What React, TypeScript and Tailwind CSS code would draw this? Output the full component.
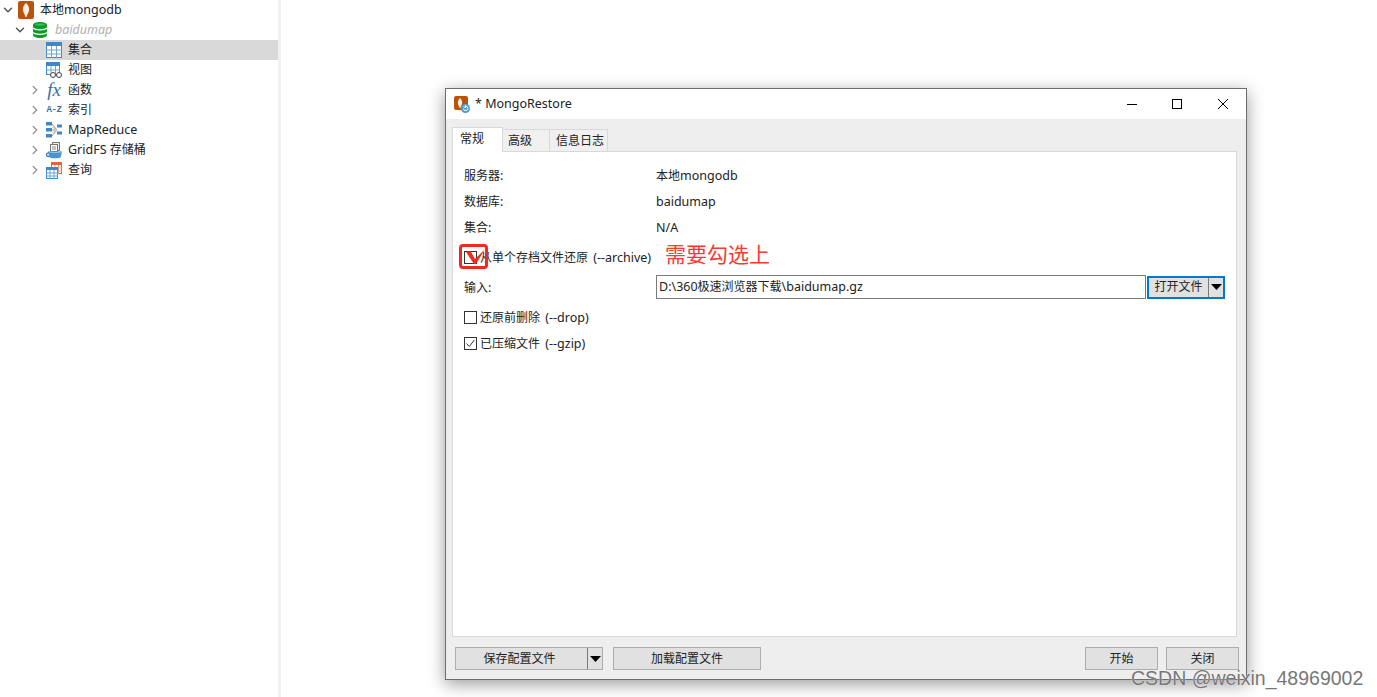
import React from 'react';
import { ChevronDown, ChevronRight } from 'lucide-react';

const font = 'font-["Noto_Sans","Noto_Sans_CJK_SC",sans-serif]';

// chinese runs sit at 12px, latin runs at the slightly larger base size
const T = ({ children }: { children: string }) => (
  <>
    {children.split(/([\u4e00-\u9fff]+)/).map((part, i) =>
      i % 2 === 1 ? <span key={i} className="text-[12px]">{part}</span> : part
    )}
  </>
);

const TableIcon = () => (
  <svg width="16" height="16" viewBox="0 0 16 16">
    <rect x="0.5" y="0.5" width="15" height="15" fill="#fff" stroke="#3f87c5" />
    <rect x="0" y="0" width="16" height="4" fill="#3f87c5" />
    <path d="M0 8h16M0 12h16M5.5 4v12M10.5 4v12" stroke="#6aa5d8" fill="none" />
  </svg>
);

const ViewIcon = () => (
  <svg width="16" height="16" viewBox="0 0 16 16">
    <rect x="0.5" y="0.5" width="13" height="12" fill="#fff" stroke="#3f87c5" />
    <rect x="0" y="0" width="14" height="4" fill="#3f87c5" />
    <path d="M0 8h14M5 4v8M9.5 4v8" stroke="#6aa5d8" fill="none" />
    <circle cx="7" cy="13" r="2.5" fill="#fff" stroke="#444" />
    <circle cx="13" cy="13" r="2.5" fill="#fff" stroke="#444" />
  </svg>
);

const DbIcon = () => (
  <svg width="14" height="16" viewBox="0 0 14 16">
    <path d="M0 3c0-4 14-4 14 0v10c0 4-14 4-14 0z" fill="#0f9a2c" />
    <path d="M0 6c2 2.4 12 2.4 14 0M0 10.5c2 2.4 12 2.4 14 0" stroke="#fff" strokeWidth="1.2" fill="none" />
    <ellipse cx="7" cy="2.6" rx="4.5" ry="1" fill="#3cc25a" />
  </svg>
);

const MongoIcon = () => (
  <svg width="16" height="18" viewBox="0 0 16 18">
    <rect width="16" height="18" rx="2" fill="#b9530b" />
    <path d="M8 2c2.6 2.4 3.4 5 3 7.4C10.600 12 9 13.500 8.400 16h-.8C7 13.500 5.400 12 5 9.400 4.600 7 5.400 4.400 8 2z" fill="#fbeee2" />
  </svg>
);

const MapReduceIcon = () => (
  <svg width="16" height="16" viewBox="0 0 16 16">
    <path d="M6 2l5 6-5 6M6 8h5" stroke="#9a9a9a" fill="none" />
    <path d="M6 5l5 3-5 3" stroke="#c4c4c4" fill="none" />
    <rect x="0" y="0" width="6" height="3.500" fill="#3f87c5" />
    <rect x="0" y="6" width="6" height="3.500" fill="#3f87c5" />
    <rect x="0" y="12" width="6" height="3.500" fill="#3f87c5" />
    <rect x="11" y="2.500" width="5" height="3" fill="#3f87c5" />
    <rect x="11" y="9.500" width="5" height="3" fill="#3f87c5" />
  </svg>
);

const GridFsIcon = () => (
  <svg width="16" height="17" viewBox="0 0 16 17">
    <rect x="6.500" y="0.500" width="7" height="8" fill="#eee" stroke="#777" />
    <rect x="4.500" y="2.500" width="7" height="7" fill="#fff" stroke="#777" />
    <path d="M6 5h4M6 7h4" stroke="#888" />
    <path d="M2 9.500h14l-1.200 5.500c-.4 1.700-11 1.700-11.600 0z" fill="#4a94d4" />
    <path d="M3 10.500C-.5 11.500-.5 14.500 3 14.500" stroke="#2f6ea8" strokeWidth="1.300" fill="none" />
    <path d="M2 9.500c3 1.400 11 1.400 14 0" stroke="#9cc8ec" fill="none" />
  </svg>
);

const QueryIcon = () => (
  <svg width="16" height="17" viewBox="0 0 16 17">
    <rect x="5.500" y="0.500" width="10" height="11" fill="#fff" stroke="#d9654f" />
    <rect x="5" y="0" width="11" height="3" fill="#d9654f" />
    <path d="M5 6h11M5 9h11M9 3v9M12.500 3v9" stroke="#e49a8a" fill="none" />
    <rect x="0.500" y="5.500" width="11" height="11" fill="#fff" stroke="#3f87c5" />
    <rect x="0" y="5" width="12" height="3" fill="#3f87c5" />
    <path d="M0 11h12M0 14h12M4 8v9M8 8v9" stroke="#6aa5d8" fill="none" />
  </svg>
);

const RestoreIcon = () => (
  <svg width="16" height="17" viewBox="0 0 16 17">
    <rect x="0" y="0" width="14" height="14" rx="2" fill="#b9530b" />
    <path d="M6 2c2 2 2.500 4 2 6-.4 1.500-1.300 2.500-1.700 4h-.6C5.300 10.500 4.400 9.500 4 8c-.5-2 0-4 2-6z" fill="#fbeee2" />
    <circle cx="11.500" cy="12.500" r="4.500" fill="#4a9bd8" />
    <path d="M9.500 12.500a2.200 2.200 0 1 0 2-2.200M11.500 8.800v3l-2-1.500" stroke="#fff" fill="none" />
  </svg>
);

const rows = [
  { label: '集合', icon: <TableIcon />, selected: true },
  { label: '视图', icon: <ViewIcon /> },
  { label: '函数', arrow: true, icon: <span className='w-4 text-center font-["Liberation_Serif",serif] italic text-[19px] leading-4 text-[#3c6f9e]'>fx</span> },
  { label: '索引', arrow: true, icon: <span className='w-4 whitespace-nowrap text-center font-["Liberation_Mono",monospace] font-bold text-[9px] leading-4 tracking-[-0.4px] text-[#3c6f9e]'>A-Z</span> },
  { label: 'MapReduce', arrow: true, icon: <MapReduceIcon /> },
  { label: 'GridFS 存储桶', arrow: true, icon: <GridFsIcon /> },
  { label: '查询', arrow: true, icon: <QueryIcon /> },
];

const Sidebar = () => (
  <div className="w-[278px] shrink-0 text-[12.5px] text-[#222]">
    <div className="flex h-5 items-center">
      <ChevronDown className="ml-px w-3.5 h-3.5 text-[#555]" strokeWidth={2.5} />
      <span className="ml-[3px]"><MongoIcon /></span>
      <span className="ml-[6px]"><T>本地mongodb</T></span>
    </div>
    <div className="flex h-5 items-center">
      <ChevronDown className="ml-[13px] w-3.5 h-3.5 text-[#555]" strokeWidth={2.5} />
      <span className="ml-[6px]"><DbIcon /></span>
      <span className="ml-2 italic text-[#b0b0b0]">baidumap</span>
    </div>
    {rows.map((r) => (
      <div key={r.label} className={`flex h-5 items-center pl-[28px] ${r.selected ? 'bg-[#d9d9d9]' : ''}`}>
        <span className="w-[18px] flex justify-start">
          {r.arrow && <ChevronRight className="w-3.5 h-3.5 text-[#999]" strokeWidth={2.5} />}
        </span>
        <span className="flex w-4 justify-center overflow-visible">{r.icon}</span>
        <span className="ml-[6px]"><T>{r.label}</T></span>
      </div>
    ))}
  </div>
);

const Checkbox = ({ checked }: { checked?: boolean }) => (
  <span className="flex h-[13px] w-[13px] items-center justify-center border border-[#333] bg-white">
    {checked && (
      <svg width="11" height="11" viewBox="0 0 11 11">
        <path d="M1.500 5.500l2.800 3 5-6.500" stroke="#333" fill="none" />
      </svg>
    )}
  </span>
);

const Caret = () => (
  <svg width="11" height="6" viewBox="0 0 11 6"><path d="M0 0h11L5.500 6z" fill="#000" /></svg>
);

const Button = ({ label, w }: { label: string; w: string }) => (
  <button className={`h-[23px] ${w} border border-[#adadad] bg-[#e1e1e1] text-[12px] text-[#222]`}>{label}</button>
);

const Field = ({ label, value }: { label: string; value: string }) => (
  <div className="flex h-[26px] items-center pt-[2px]">
    <span className="w-[192px]"><T>{label}</T></span>
    <span><T>{value}</T></span>
  </div>
);

const CheckRow = ({ label, checked, className }: { label: string; checked?: boolean; className?: string }) => (
  <div className={`flex h-[26px] items-center gap-[3px] ${className ?? ''}`}>
    <Checkbox checked={checked} />
    <span className="pt-[2px] [word-spacing:2px]"><T>{label}</T></span>
  </div>
);

const Dialog = () => (
  <div className="absolute left-[445px] top-[88px] flex h-[592px] w-[802px] flex-col border border-[#6d6d6d] bg-[#eeeeee] text-[12.5px] text-[#222] shadow-[0_4px_16px_rgba(0,0,0,0.4)]">
    <div className="flex h-[30px] shrink-0 items-center bg-white pl-2">
      <RestoreIcon />
      <span className="ml-[5px]">* MongoRestore</span>
      <div className="ml-auto flex items-center">
        <svg width="12" height="12" viewBox="0 0 12 12"><path d="M1 6.500h10" stroke="#000" /></svg>
        <svg className="ml-[33px]" width="12" height="12" viewBox="0 0 12 12"><rect x="1.500" y="1.500" width="9" height="9" fill="none" stroke="#000" /></svg>
        <svg className="ml-[34px] mr-[17px]" width="12" height="12" viewBox="0 0 12 12"><path d="M1 1l10 10M11 1L1 11" stroke="#000" /></svg>
      </div>
    </div>
    <div className="flex h-[32px] shrink-0 items-end pl-[6px] text-[12px]">
      <div className="z-10 -mb-px flex h-[25px] w-[51px] items-start border border-b-0 border-[#d9d9d9] bg-white pl-[7px] pt-[2px]">常规</div>
      <div className="flex h-[22px] w-[47px] items-center border border-l-0 border-b-0 border-[#d9d9d9] bg-[#f0f0f0] pl-[5px] pt-px">高级</div>
      <div className="flex h-[22px] w-[58px] items-center border border-l-0 border-b-0 border-[#d9d9d9] bg-[#f0f0f0] pl-[6px] pt-px">信息日志</div>
    </div>
    <div className="ml-[6px] mr-[9px] flex-1 border border-[#d9d9d9] bg-white pl-[11px] pr-[11px] pt-[10px]">
      <Field label="服务器:" value="本地mongodb" />
      <Field label="数据库:" value="baidumap" />
      <Field label="集合:" value="N/A" />
      <CheckRow className="mt-1" label="从单个存档文件还原 (--archive)" />
      <div className="mt-1 flex h-[26px] items-center">
        <span className="w-[192px] pt-[2px]"><T>输入:</T></span>
        <div className="flex h-[24px] flex-1 items-center border border-[#7a7a7a] pl-[2px]"><span><T>D:\360极速浏览器下载\baidumap.gz</T></span></div>
        <div className="ml-px flex h-[23px] w-[78px] items-center border-2 border-[#0078d7] bg-[#e1e1e1] text-[12px]">
          <span className="flex-1 text-center">打开文件</span>
          <span className="flex h-full w-[15px] items-center justify-center border-l border-[#7a7a7a]"><Caret /></span>
        </div>
      </div>
      <CheckRow className="mt-1" label="还原前删除 (--drop)" />
      <CheckRow label="已压缩文件 (--gzip)" checked />
    </div>
    <div className="flex h-[42px] shrink-0 items-start pl-[9px] pr-[7px] pt-[10px]">
      <div className="flex h-[23px] w-[148px] items-center border border-[#adadad] bg-[#e1e1e1] text-[12px]">
        <span className="flex-1 pr-1 text-center">保存配置文件</span>
        <span className="flex h-full w-[15px] items-center justify-center border-l border-[#7a7a7a]"><Caret /></span>
      </div>
      <Button label="加载配置文件" w="ml-[10px] w-[148px]" />
      <Button label="开始" w="ml-auto w-[73px]" />
      <Button label="关闭" w="ml-2 w-[73px]" />
    </div>
  </div>
);

export default function App() {
  return (
    <div className={`relative flex h-[697px] w-[1377px] overflow-hidden bg-white ${font}`}>
      <Sidebar />
      <div className="w-[3px] shrink-0 bg-[#f0f0f0]" />
      <Dialog />
      {/* annotation drawn on the screenshot */}
      <div className="absolute left-[459px] top-[244px] h-[25px] w-[29px] rounded-[4px] border-[3px] border-[#f02a1d]" />
      <svg className="absolute left-[466px] top-[249px]" width="20" height="16" viewBox="0 0 20 16">
        <path d="M0 3l4.500-1L9 10 19 0 10 15H8z" fill="#f02a1d" />
      </svg>
      <span className="absolute left-[665px] top-[239px] text-[21px] leading-[30px] text-[#f53a2f]">需要勾选上</span>
      <span className='absolute left-[1131px] top-[666px] font-["Liberation_Sans",sans-serif] text-[19.5px] leading-6 text-[#777] [text-shadow:0_0_1px_#fff]'>CSDN @weixin_48969002</span>
    </div>
  );
}
